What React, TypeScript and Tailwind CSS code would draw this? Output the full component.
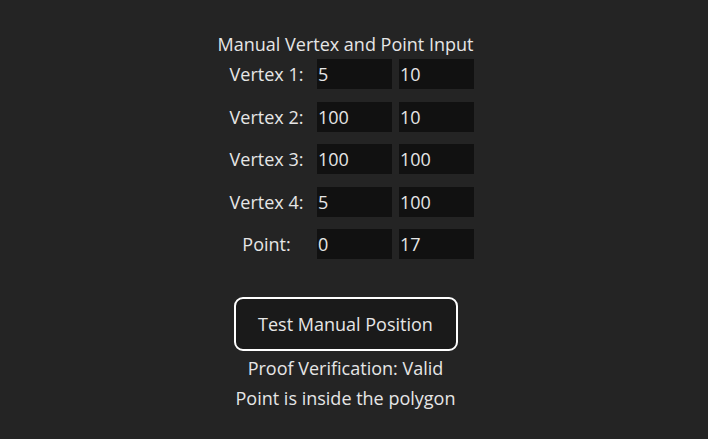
const rows = [
  { label: 'Vertex 1:', x: '5', y: '10' },
  { label: 'Vertex 2:', x: '100', y: '10' },
  { label: 'Vertex 3:', x: '100', y: '100' },
  { label: 'Vertex 4:', x: '5', y: '100' },
  { label: 'Point:', x: '0', y: '17' },
]

export default function App() {
  return (
    <div
      className="flex h-[439px] w-full flex-col items-center bg-[#242424] pt-[32px] pr-[17px] text-[18px] leading-[24px] text-[#e6e6e6]"
      style={{ fontFamily: '"Open Sans", "Noto Sans", sans-serif' }}
    >
      <div>Manual Vertex and Point Input</div>
      <div className="mt-[3px] mr-[1px] flex flex-col gap-[12.5px]">
        {rows.map((r) => (
          <div key={r.label} className="flex items-center">
            <span className="w-[101px] text-center">{r.label}</span>
            <input
              readOnly
              value={r.x}
              className="h-[30px] w-[75px] bg-[#111111] px-[1px] text-[18px] text-[#e6e6e6] outline-none"
            />
            <input
              readOnly
              value={r.y}
              className="ml-[7px] h-[30px] w-[75px] bg-[#111111] px-[1px] text-[18px] text-[#e6e6e6] outline-none"
            />
          </div>
        ))}
      </div>
      <button className="mt-[38px] h-[54px] w-[224px] rounded-[9px] border-2 border-white bg-[#1a1a1a] text-[18px] text-[#e6e6e6]">
        Test Manual Position
      </button>
      <div className="mt-[2px] leading-[30px]">Proof Verification: Valid</div>
      <div className="leading-[30px]">Point is inside the polygon</div>
    </div>
  )
}
